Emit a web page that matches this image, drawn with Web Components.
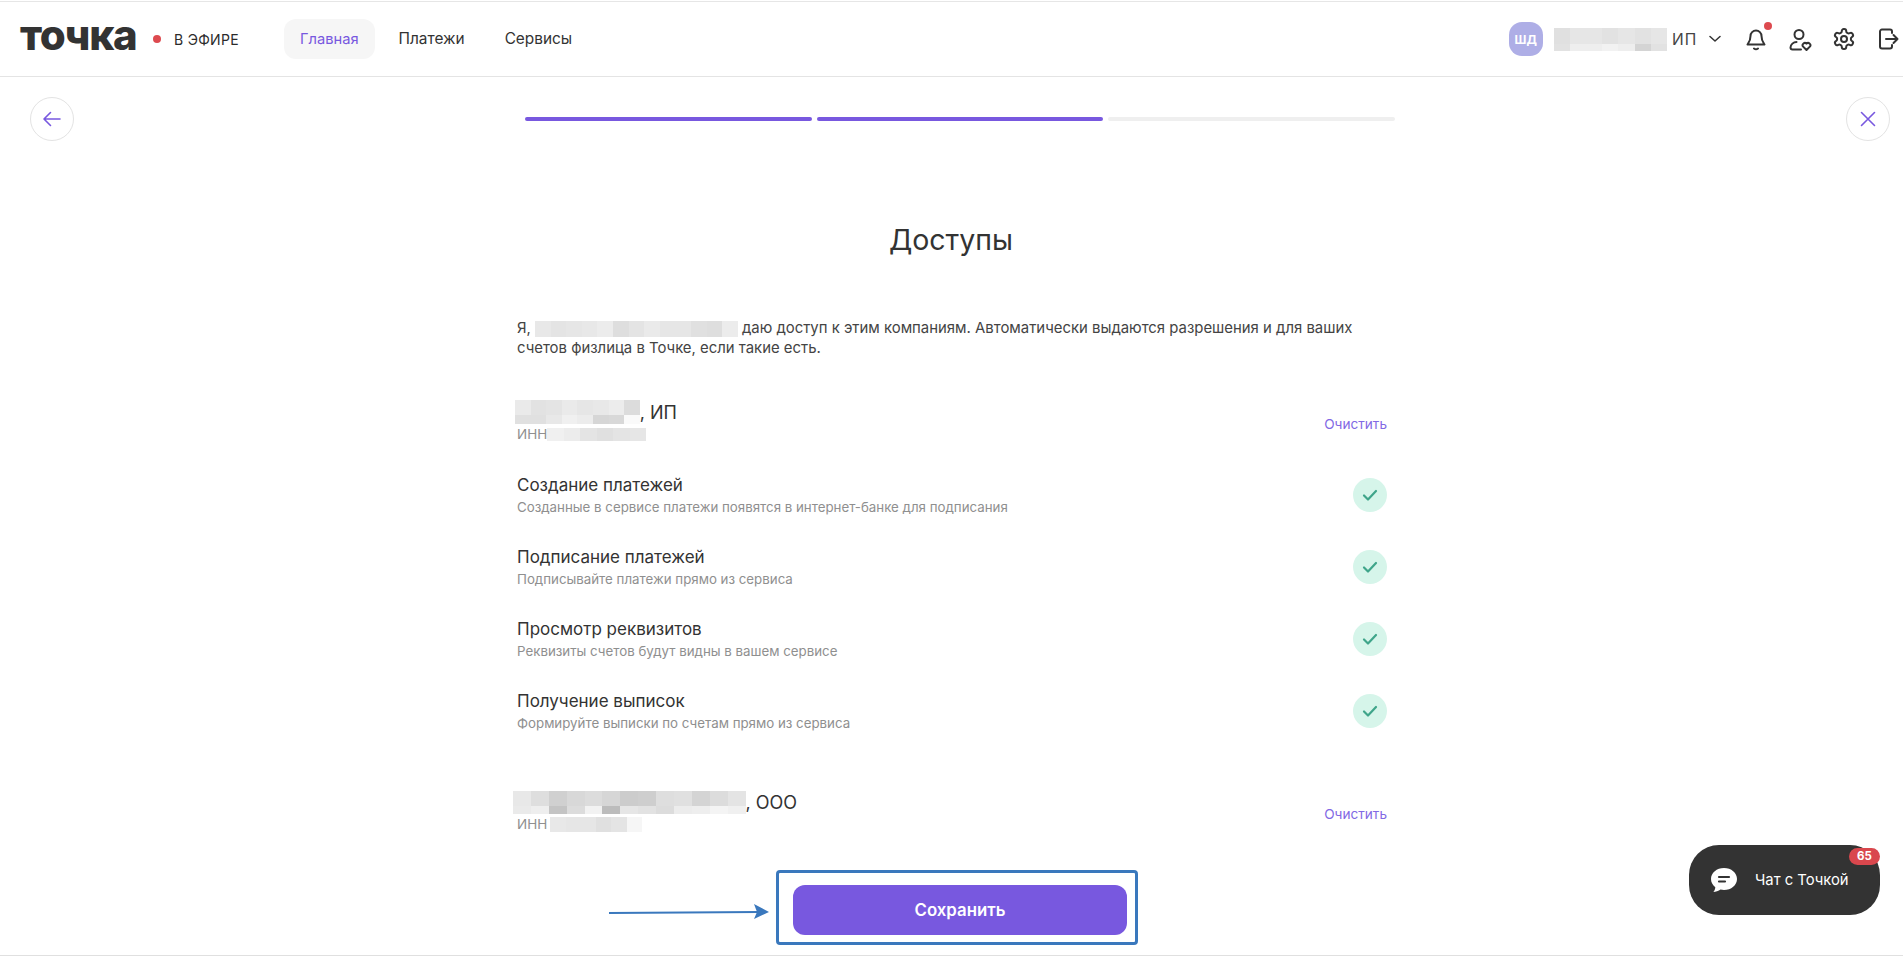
<!doctype html>
<html lang="ru">
<head>
<meta charset="utf-8">
<title>Доступы</title>
<style>
  html, body { margin: 0; padding: 0; background: #fff; }
  body { font-family: Inter, "Noto Sans", sans-serif; color: #333; }
</style>
</head>
<body>
<access-page></access-page>

<script>
const ICON_COLOR = '#333';

// grey pixelated block standing in for redacted names
class PixelBlur extends HTMLElement {
  connectedCallback() {
    const rows = this.getAttribute('cells').split('|').map(r => r.trim().split(/\s+/));
    const heights = (this.getAttribute('heights') || '').split(' ');
    const cell = this.getAttribute('cell') || 16;
    const html = rows.map((row, y) => row.map(c =>
      `<i style="background:#${c}${c}${c};height:${heights[y] || 16}px"></i>`).join('')).join('');
    this.attachShadow({mode: 'open'}).innerHTML = `
      <style>
        :host { display: inline-grid; grid-template-columns: repeat(${rows[0].length}, ${cell}px); vertical-align: middle; }
        i { display: block; }
      </style>${html}`;
  }
}

class TopBar extends HTMLElement {
  connectedCallback() {
    this.attachShadow({mode: 'open'}).innerHTML = `
      <style>
        :host { display: flex; align-items: center; box-sizing: border-box; height: 76px; margin: 1px 0 0;
                padding: 0 3px 0 20px; border-top: 1px solid #e6e6e6; border-bottom: 1px solid #e4e4e4; }
        .logo { font-weight: 800; font-size: 42px; line-height: 48px; width: 116px; color: #333;
                letter-spacing: -1.300px; margin-top: -9px; white-space: nowrap; }
        .dot { width: 8px; height: 8px; border-radius: 50%; background: #dd4a4f; margin: 0 13px 0 17px; }
        .air { font-size: 14px; font-weight: 400; letter-spacing: .3px; width: 64px; white-space: nowrap; color: #2b2b2b; }
        nav { display: flex; gap: 8px; margin-left: 46px; }
        nav a { display: block; padding: 0 16px; line-height: 40px; font-size: 15.400px; border-radius: 12px; color: #333; }
        nav a.on { background: #f6f6f6; color: #7858df; font-size: 14.700px; }
        .right { display: flex; align-items: center; margin-left: auto; }
        .avatar { width: 34px; height: 34px; border-radius: 13px; background: #aeaee6; color: #fff; font-size: 12px;
                  font-weight: 700; display: flex; align-items: center; justify-content: center; margin-right: 11px; }
        .firm { font-size: 15.500px; margin-left: 5px; letter-spacing: 1px; color: #444; width: 24px; }
        .chev { margin: 0 2px 0 13px; }
        .icons { display: flex; gap: 20px; margin-left: 21px; }
        .bell { position: relative; display: block; width: 24px; height: 24px; }
        .bell b { position: absolute; right: -4px; top: -5px; width: 8px; height: 8px; border-radius: 50%; background: #dd4a4f; }
        svg { display: block; fill: none; stroke: ${ICON_COLOR}; stroke-width: 2; stroke-linecap: round; stroke-linejoin: round; }
      </style>
      <span class="logo">точка</span>
      <span class="dot"></span>
      <span class="air">В ЭФИРЕ</span>
      <nav><a class="on">Главная</a><a>Платежи</a><a>Сервисы</a></nav>
      <div class="right">
        <span class="avatar">ШД</span>
        <pixel-blur cell="16.200" heights="16 7" cells="e0 e6 e6 e2 e6 e2 e6 | e2 ee ee f2 ee d4 e2"></pixel-blur>
        <span class="firm">ИП</span>
        <svg class="chev" width="12" height="8" viewBox="0 0 12 8" style="stroke-width:1.500"><path d="M1 1.500l5 4.500 5-4.500"/></svg>
        <div class="icons">
          <span class="bell">
            <svg width="24" height="24" viewBox="0 0 24 24"><path d="M6.500 9a5.500 5.500 0 0 1 11 0c0 5 2 7 3 8.500H3.500c1-1.500 3-3.500 3-8.500z"/><path d="M10 21.500c1 .7 3 .7 4 0"/></svg>
            <b></b>
          </span>
          <svg width="24" height="24" viewBox="0 0 24 24"><circle cx="11" cy="7.500" r="4.500"/><path d="M13 22.500H4.500a2 2 0 0 1-2-2c0-3 3-5.500 6-5.500"/><path d="M18.500 23l-3.600-3.600a2.300 2.300 0 0 1 3.600-2.800 2.300 2.300 0 0 1 3.600 2.800z"/></svg>
          <svg width="24" height="24" viewBox="0 0 24 24"><path d="M12.220 2h-.44a2 2 0 0 0-2 2v.18a2 2 0 0 1-1 1.730l-.43.25a2 2 0 0 1-2 0l-.15-.08a2 2 0 0 0-2.730.73l-.22.38a2 2 0 0 0 .73 2.730l.15.1a2 2 0 0 1 1 1.720v.51a2 2 0 0 1-1 1.740l-.15.09a2 2 0 0 0-.73 2.730l.22.38a2 2 0 0 0 2.730.73l.15-.08a2 2 0 0 1 2 0l.43.25a2 2 0 0 1 1 1.730V20a2 2 0 0 0 2 2h.44a2 2 0 0 0 2-2v-.18a2 2 0 0 1 1-1.730l.43-.25a2 2 0 0 1 2 0l.15.08a2 2 0 0 0 2.730-.73l.22-.39a2 2 0 0 0-.73-2.730l-.15-.08a2 2 0 0 1-1-1.740v-.5a2 2 0 0 1 1-1.740l.15-.09a2 2 0 0 0 .73-2.730l-.22-.38a2 2 0 0 0-2.730-.73l-.15.08a2 2 0 0 1-2 0l-.43-.25a2 2 0 0 1-1-1.730V4a2 2 0 0 0-2-2z"/><circle cx="12" cy="12" r="3"/></svg>
          <svg width="24" height="24" viewBox="0 0 24 24"><path d="M16 6V4.500a2 2 0 0 0-2-2H6a2 2 0 0 0-2 2v15a2 2 0 0 0 2 2h8a2 2 0 0 0 2-2V18"/><path d="M10 12h11.500M17.500 8l4 4-4 4"/></svg>
        </div>
      </div>`;
  }
}

class RoundButton extends HTMLElement {
  connectedCallback() {
    const paths = {
      back: 'M20 12H4.500M10.500 5.500L4 12l6.500 6.500',
      close: 'M5.500 5.500l13 13M18.500 5.500l-13 13'
    };
    this.attachShadow({mode: 'open'}).innerHTML = `
      <style>
        :host { display: flex; align-items: center; justify-content: center; width: 44px; height: 44px; box-sizing: border-box;
                border: 1px solid #e3e3e3; border-radius: 50%; }
        svg { fill: none; stroke: #7858df; stroke-width: 1.600; stroke-linecap: round; stroke-linejoin: round; }
      </style>
      <svg width="24" height="24" viewBox="0 0 24 24"><path d="${paths[this.getAttribute('kind')]}"/></svg>`;
  }
}

class StepBar extends HTMLElement {
  connectedCallback() {
    const done = +this.getAttribute('done');
    const total = +this.getAttribute('total');
    let bars = '';
    for (let i = 0; i < total; i++) bars += `<i class="${i < done ? 'on' : ''}"></i>`;
    this.attachShadow({mode: 'open'}).innerHTML = `
      <style>
        :host { display: flex; gap: 5px; width: 870px; }
        i { flex: 1; height: 4px; border-radius: 2px; background: #efefef; }
        i.on { background: #7858df; }
      </style>${bars}`;
  }
}

// name line + ИНН with the purple "Очистить" on the right
class CompanyHead extends HTMLElement {
  connectedCallback() {
    this.attachShadow({mode: 'open'}).innerHTML = `
      <style>
        :host { display: flex; align-items: center; justify-content: space-between; }
        .name { display: flex; align-items: center; height: 24px; font-size: 18px; color: #333; }
        .inn { display: flex; align-items: center; height: 20px; font-size: 13.500px; color: #8f8f8f; }
        .clear { font-size: 13.600px; color: #8269e4; margin: 4px 0 0 0; }
        ::slotted([slot=name]) { margin-left: var(--name-shift, -2px); }
        ::slotted([slot=inn]) { margin-left: var(--inn-shift, 0); }
      </style>
      <div>
        <div class="name"><slot name="name"></slot><span>, ${this.getAttribute('form')}</span></div>
        <div class="inn">ИНН<slot name="inn"></slot></div>
      </div>
      <span class="clear">Очистить</span>`;
  }
}

class PermissionRow extends HTMLElement {
  connectedCallback() {
    const title = this.getAttribute('title');
    this.removeAttribute('title');
    this.attachShadow({mode: 'open'}).innerHTML = `
      <style>
        :host { display: flex; align-items: center; justify-content: space-between; height: 72px; }
        .title { font-size: 17px; line-height: 24px; color: #333; }
        .desc { font-size: 13.300px; line-height: 20px; color: #8f8f8f; }
        .check { width: 34px; height: 34px; border-radius: 50%; background: #d6f5ea; display: flex; align-items: center; justify-content: center; }
        svg { fill: none; stroke: #3fa58a; stroke-width: 2.200; stroke-linecap: round; stroke-linejoin: round; }
      </style>
      <div>
        <div class="title">${title}</div>
        <div class="desc"><slot></slot></div>
      </div>
      <span class="check"><svg width="18" height="18" viewBox="0 0 18 18"><path d="M3 9.500l4 4 8-8.500"/></svg></span>`;
  }
}

class ChatButton extends HTMLElement {
  connectedCallback() {
    this.attachShadow({mode: 'open'}).innerHTML = `
      <style>
        :host { position: absolute; left: 1689px; top: 845px; width: 191px; height: 70px; box-sizing: border-box; padding-left: 22px; gap: 18px;
                display: flex; align-items: center; background: #333; border-radius: 30px; color: #fff; font-size: 14.800px; }
        .badge { position: absolute; right: 0; top: 3px; width: 31px; height: 17px; border-radius: 9px; background: #d9474d;
                 font-size: 11.500px; font-weight: 700; line-height: 17px; text-align: center; }
        svg { display: block; }
      </style>
      <svg width="26" height="24" viewBox="0 0 26 24"><path fill="#fff" d="M13 0c7.200 0 13 4.900 13 11s-5.800 11-13 11c-1.200 0-2.400-.14-3.500-.4C7.600 23 4.500 24 2.300 24c1-1 1.900-2.700 2-4.800C1.700 17.200 0 14.300 0 11 0 4.900 5.800 0 13 0z"/><path d="M8 9h10M8 13.500h6" stroke="#333" stroke-width="2.200" stroke-linecap="round"/></svg>
      <span>Чат с Точкой</span>
      <span class="badge">65</span>`;
  }
}

// hand drawn callout on top of the screenshot: frame around the button plus arrow
class CalloutMark extends HTMLElement {
  connectedCallback() {
    this.attachShadow({mode: 'open'}).innerHTML = `
      <style>
        :host { position: absolute; left: 0; top: 0; width: 0; height: 0; }
        .frame { position: absolute; left: 776px; top: 870px; width: 362px; height: 75px; box-sizing: border-box;
                 border: 3px solid #3a78bd; border-radius: 4px; }
        svg { position: absolute; left: 600px; top: 895px; }
      </style>
      <div class="frame"></div>
      <svg width="176" height="30" viewBox="0 0 176 30"><path d="M9 18l150-1" stroke="#3a78bd" stroke-width="2" fill="none"/><path d="M154 9l15 8-15 7 3-7z" fill="#3a78bd"/></svg>`;
  }
}

class AccessPage extends HTMLElement {
  connectedCallback() {
    this.attachShadow({mode: 'open'}).innerHTML = `
      <style>
        :host { display: block; position: relative; height: 956px; overflow: hidden; box-sizing: border-box; border-bottom: 1px solid #e0e0e0; }
        .steps { display: flex; align-items: center; justify-content: space-between; padding: 20px 13px 0 30px; }
        main { width: 870px; margin: 0 auto; padding-left: 1px; box-sizing: content-box; }
        h1 { margin: 79px 2px 0 0; font-size: 28.500px; font-weight: 400; line-height: 40px; text-align: center; color: #333; }
        .lead { margin: 58px 0 42px; font-size: 14.900px; line-height: 20px; color: #444; white-space: nowrap; }
        .perms { margin: 15px 0 43px; }
        button { display: block; margin: 51px 0 0 276px; width: 334px; height: 50px; border: 0; border-radius: 12px; background: #7858df;
                 color: #fff; font: 600 16.800px Inter, sans-serif; }
      </style>
      <top-bar></top-bar>
      <div class="steps">
        <round-button kind="back"></round-button>
        <step-bar done="2" total="3"></step-bar>
        <round-button kind="close"></round-button>
      </div>
      <main>
        <h1>Доступы</h1>
        <div class="lead">
          <div>Я, <pixel-blur cell="15.600" heights="16" cells="e8 e4 e6 e8 ec de e4 ea e6 e6 e0 de ec"></pixel-blur> даю доступ к этим компаниям. Автоматически выдаются разрешения и для ваших</div>
          <div>счетов физлица в Точке, если такие есть.</div>
        </div>
        <company-head form="ИП">
          <pixel-blur slot="name" cell="15.600" heights="15 9" cells="ea e2 e4 ea e6 e8 ec dc | e0 e0 e8 f0 ec d6 d8 fa"></pixel-blur>
          <pixel-blur slot="inn" cell="16.500" heights="13" cells="f0 ec e4 e0 e4 e6"></pixel-blur>
        </company-head>
        <div class="perms">
          <permission-row title="Создание платежей">Созданные в сервисе платежи появятся в интернет-банке для подписания</permission-row>
          <permission-row title="Подписание платежей">Подписывайте платежи прямо из сервиса</permission-row>
          <permission-row title="Просмотр реквизитов">Реквизиты счетов будут видны в вашем сервисе</permission-row>
          <permission-row title="Получение выписок">Формируйте выписки по счетам прямо из сервиса</permission-row>
        </div>
        <company-head form="ООО" style="--name-shift:-4px;--inn-shift:3px">
          <pixel-blur slot="name" cell="17.900" heights="15 8" cells="e8 de d0 d8 dc d6 cc ce de e0 d4 dc e4 | ea ee c4 dc f2 bc e6 e2 dc ec ee f4 f0"></pixel-blur>
          <pixel-blur slot="inn" cell="15.300" heights="15" cells="e8 e6 e6 e0 e4 f6"></pixel-blur>
        </company-head>
        <button>Сохранить</button>
      </main>
      <callout-mark></callout-mark>
      <chat-button></chat-button>`;
  }
}

customElements.define('pixel-blur', PixelBlur);
customElements.define('top-bar', TopBar);
customElements.define('round-button', RoundButton);
customElements.define('step-bar', StepBar);
customElements.define('company-head', CompanyHead);
customElements.define('permission-row', PermissionRow);
customElements.define('chat-button', ChatButton);
customElements.define('callout-mark', CalloutMark);
customElements.define('access-page', AccessPage);
</script>
</body>
</html>
